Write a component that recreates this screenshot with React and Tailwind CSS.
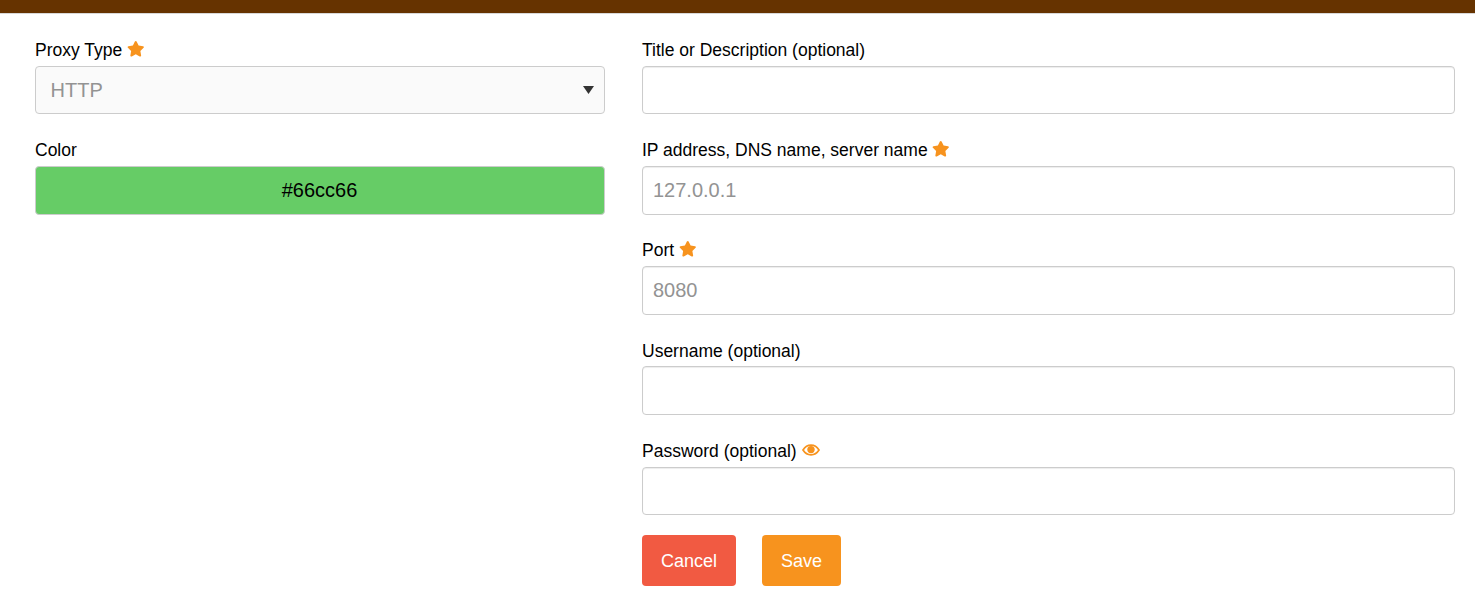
import { FaStar } from "react-icons/fa";

const inputClass =
  "block w-full h-[48.6px] rounded border border-[#ccc] bg-white px-[10px] text-[20px] text-[#555] shadow-[inset_0_1px_1px_rgba(0,0,0,0.075)] outline-none placeholder:text-[#939393]";

const Star = () => <FaStar className="ml-[4.5px] -mt-[0.5px] text-[#f7931e] text-[17.5px]" />;

// eye drawn by hand, the FA outline one comes out too thin at this size
const Eye = () => (
  <svg className="ml-[5px] mt-[1.5px]" width="18" height="16" viewBox="0 0 18 16" fill="none">
    <path
      d="M1 8C3 4.8 5.8 3.2 9 3.2S15 4.8 17 8C15 11.2 12.2 12.8 9 12.8S3 11.2 1 8Z"
      stroke="#f7931e"
      strokeWidth="1.7"
    />
    <circle cx="9" cy="7.6" r="3.7" fill="#f7931e" />
  </svg>
);

const Field = ({ label, icon, children }) => (
  <div className="mb-[23.8px]">
    <label className="flex h-[27.8px] items-start pt-[2px] text-[17.5px] leading-[20px] text-black">
      <span>{label}</span>
      {icon}
    </label>
    {children}
  </div>
);

const App = () => {
  return (
    <div className="min-h-[608px] bg-white font-['Liberation_Sans',Arial,sans-serif]">
      <div className="h-[14px] border-b border-[#d8d8d8] bg-[#663300]" />

      <div className="flex gap-[37px] pl-[35px] pr-[20px] pt-[24px]">
        {/* left column */}
        <div className="w-[570px] shrink-0">
          <Field label="Proxy Type" icon={<Star />}>
            <div className="relative">
              <select className="block h-[48.6px] w-full appearance-none rounded border border-[#ccc] bg-[#fafafa] pl-[14.5px] text-[20px] text-[#939393] outline-none">
                <option>HTTP</option>
              </select>
              <svg
                className="pointer-events-none absolute right-[11px] top-[20px]"
                width="11"
                height="8"
                viewBox="0 0 11 8"
              >
                <path d="M0 0H11L5.5 8Z" fill="#333" />
              </svg>
            </div>
          </Field>

          <Field label="Color">
            <button className="block h-[48.6px] w-full rounded border border-[#ccc] bg-[#66cc66] pr-[1px] text-center text-[20px] text-black">
              #66cc66
            </button>
          </Field>
        </div>

        {/* right column */}
        <div className="min-w-0 flex-1">
          <Field label="Title or Description (optional)">
            <input type="text" className={inputClass} />
          </Field>
          <Field label="IP address, DNS name, server name" icon={<Star />}>
            <input type="text" placeholder="127.0.0.1" className={inputClass} />
          </Field>
          <Field label="Port" icon={<Star />}>
            <input type="text" placeholder="8080" className={inputClass} />
          </Field>
          <Field label="Username (optional)">
            <input type="text" className={inputClass} />
          </Field>
          <Field label="Password (optional)" icon={<Eye />}>
            <input type="password" className={inputClass} />
          </Field>

          <div className="-mt-[4px] flex gap-[26px]">
            <button className="h-[51px] w-[94px] rounded bg-[#f15a42] pt-[2px] text-[18px] text-white">
              Cancel
            </button>
            <button className="h-[51px] w-[79px] rounded bg-[#f7931e] pt-[2px] text-[18px] text-white">
              Save
            </button>
          </div>
        </div>
      </div>
    </div>
  );
};

export default App;
